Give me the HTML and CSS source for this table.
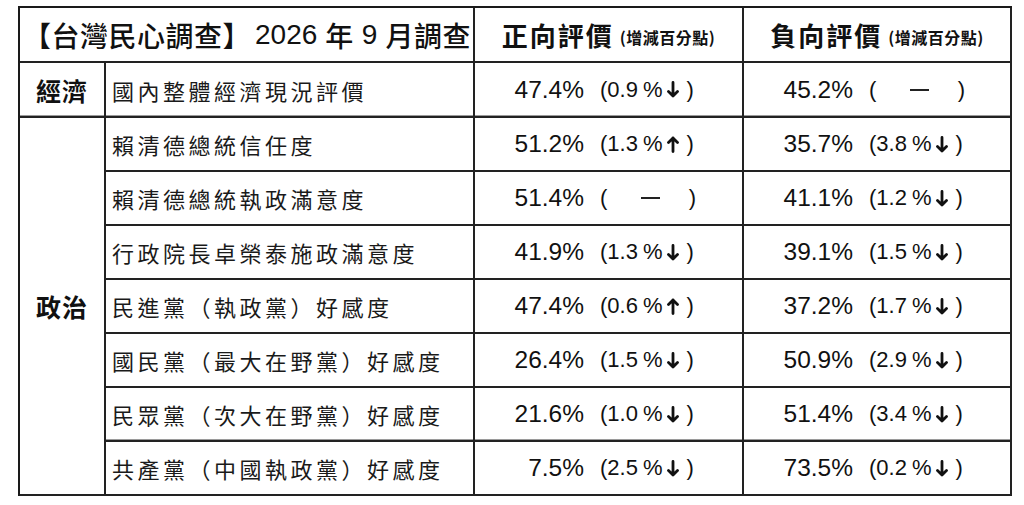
FILE: index.html
```html
<!DOCTYPE html>
<html lang="zh-Hant">
<head>
<meta charset="utf-8">
<title>台灣民心調查</title>
<link rel="stylesheet" href="styles.css">
</head>
<body>
<div class="sheet">
  <div class="cell title span2">【台灣民心調查】<span class="num first">2026</span>年<span class="num">9</span>月調查</div>
  <div class="cell head">正向評價<small>(增減百分點)</small></div>
  <div class="cell head">負向評價<small>(增減百分點)</small></div>

  <div class="cell cat dbl">經濟</div>
  <div class="cell item dbl">國內整體經濟現況評價</div>
  <div class="cell val dbl"><span class="pct">47.4%</span><span class="chg">(0.9<span class="pc">%</span><svg class="arw" viewBox="0 0 12 17"><path d="M6 1.5V15M1.5 10.5L6 15l4.5-4.5"/></svg>)</span></div>
  <div class="cell val dbl"><span class="pct">45.2%</span><span class="chg flat">(<span class="dash"></span>)</span></div>

  <div class="cell cat politics">政治</div>

  <div class="cell item">賴清德總統信任度</div>
  <div class="cell val"><span class="pct">51.2%</span><span class="chg">(1.3<span class="pc">%</span><svg class="arw up" viewBox="0 0 12 17"><path d="M6 1.5V15M1.5 10.5L6 15l4.5-4.5"/></svg>)</span></div>
  <div class="cell val"><span class="pct">35.7%</span><span class="chg">(3.8<span class="pc">%</span><svg class="arw" viewBox="0 0 12 17"><path d="M6 1.5V15M1.5 10.5L6 15l4.5-4.5"/></svg>)</span></div>

  <div class="cell item">賴清德總統執政滿意度</div>
  <div class="cell val"><span class="pct">51.4%</span><span class="chg flat">(<span class="dash"></span>)</span></div>
  <div class="cell val"><span class="pct">41.1%</span><span class="chg">(1.2<span class="pc">%</span><svg class="arw" viewBox="0 0 12 17"><path d="M6 1.5V15M1.5 10.5L6 15l4.5-4.5"/></svg>)</span></div>

  <div class="cell item">行政院長卓榮泰施政滿意度</div>
  <div class="cell val"><span class="pct">41.9%</span><span class="chg">(1.3<span class="pc">%</span><svg class="arw" viewBox="0 0 12 17"><path d="M6 1.5V15M1.5 10.5L6 15l4.5-4.5"/></svg>)</span></div>
  <div class="cell val"><span class="pct">39.1%</span><span class="chg">(1.5<span class="pc">%</span><svg class="arw" viewBox="0 0 12 17"><path d="M6 1.5V15M1.5 10.5L6 15l4.5-4.5"/></svg>)</span></div>

  <div class="cell item">民進黨（執政黨）好感度</div>
  <div class="cell val"><span class="pct">47.4%</span><span class="chg">(0.6<span class="pc">%</span><svg class="arw up" viewBox="0 0 12 17"><path d="M6 1.5V15M1.5 10.5L6 15l4.5-4.5"/></svg>)</span></div>
  <div class="cell val"><span class="pct">37.2%</span><span class="chg">(1.7<span class="pc">%</span><svg class="arw" viewBox="0 0 12 17"><path d="M6 1.5V15M1.5 10.5L6 15l4.5-4.5"/></svg>)</span></div>

  <div class="cell item">國民黨（最大在野黨）好感度</div>
  <div class="cell val"><span class="pct">26.4%</span><span class="chg">(1.5<span class="pc">%</span><svg class="arw" viewBox="0 0 12 17"><path d="M6 1.5V15M1.5 10.5L6 15l4.5-4.5"/></svg>)</span></div>
  <div class="cell val"><span class="pct">50.9%</span><span class="chg">(2.9<span class="pc">%</span><svg class="arw" viewBox="0 0 12 17"><path d="M6 1.5V15M1.5 10.5L6 15l4.5-4.5"/></svg>)</span></div>

  <div class="cell item dbl">民眾黨（次大在野黨）好感度</div>
  <div class="cell val dbl"><span class="pct">21.6%</span><span class="chg">(1.0<span class="pc">%</span><svg class="arw" viewBox="0 0 12 17"><path d="M6 1.5V15M1.5 10.5L6 15l4.5-4.5"/></svg>)</span></div>
  <div class="cell val dbl"><span class="pct">51.4%</span><span class="chg">(3.4<span class="pc">%</span><svg class="arw" viewBox="0 0 12 17"><path d="M6 1.5V15M1.5 10.5L6 15l4.5-4.5"/></svg>)</span></div>

  <div class="cell item">共產黨（中國執政黨）好感度</div>
  <div class="cell val"><span class="pct">7.5%</span><span class="chg">(2.5<span class="pc">%</span><svg class="arw" viewBox="0 0 12 17"><path d="M6 1.5V15M1.5 10.5L6 15l4.5-4.5"/></svg>)</span></div>
  <div class="cell val"><span class="pct">73.5%</span><span class="chg">(0.2<span class="pc">%</span><svg class="arw" viewBox="0 0 12 17"><path d="M6 1.5V15M1.5 10.5L6 15l4.5-4.5"/></svg>)</span></div>
</div>
</body>
</html>
```

FILE: styles.css
```css
html, body {
  margin: 0;
  padding: 0;
  background: #ffffff;
}

body {
  font-family: "Noto Sans CJK TC", "Noto Sans", sans-serif;
  color: #111111;
}

.sheet {
  margin: 6px 0 0 18px;
  width: 994px;
  box-sizing: border-box;
  display: grid;
  grid-template-columns: 86px 369px 269px 268px;
  grid-template-rows: 55px 55px repeat(7, 54px);
  border-top: 2px solid #1a1a1a;
  border-left: 2px solid #1a1a1a;
}

.cell {
  box-sizing: border-box;
  border-right: 2px solid #222222;
  border-bottom: 2px solid #222222;
  display: flex;
  align-items: center;
  min-width: 0;
  white-space: nowrap;
}

.cell.dbl {
  box-shadow: inset 0 -1px 0 #9a9a9a;
}

.span2 {
  grid-column: span 2;
}

.title {
  font-size: 28px;
  font-weight: 500;
  padding-left: 3px;
  letter-spacing: 0.5px;
}

.title .num {
  font-family: "Liberation Sans", Arial, sans-serif;
  font-weight: 400;
  letter-spacing: 0;
  margin: 0 8px;
}

.title .num.first {
  margin-left: 4px;
}

.head {
  justify-content: center;
  font-size: 26px;
  font-weight: 700;
  letter-spacing: 2px;
}

.head small {
  font-size: 16px;
  font-weight: 700;
  letter-spacing: 0.5px;
  margin-left: 6px;
  margin-top: 4px;
}

.cat {
  justify-content: center;
  font-size: 25px;
  font-weight: 700;
  letter-spacing: 1px;
}

.politics {
  grid-row: span 7;
}

.item {
  padding-left: 6px;
  font-size: 22px;
  font-weight: 400;
  letter-spacing: 3.5px;
  color: #1a1a1a;
}

.val {
  padding-left: 27px;
  font-family: "Liberation Sans", Arial, sans-serif;
}

.pct {
  display: inline-block;
  width: 82px;
  text-align: right;
  font-size: 24.5px;
}

.chg {
  display: inline-flex;
  align-items: center;
  width: 96px;
  margin-left: 16px;
  font-size: 22px;
}

.pc {
  margin-left: 5px;
}

.arw {
  width: 12px;
  height: 17px;
  margin: 0 7px 0 5px;
  fill: none;
  stroke: #111111;
  stroke-width: 2.8;
  stroke-linecap: round;
  stroke-linejoin: round;
}

.arw.up {
  transform: rotate(180deg);
}

.chg.flat {
  justify-content: space-between;
}

.dash {
  display: block;
  width: 19px;
  height: 2px;
  background: #222222;
  margin-left: 4px;
}
```
